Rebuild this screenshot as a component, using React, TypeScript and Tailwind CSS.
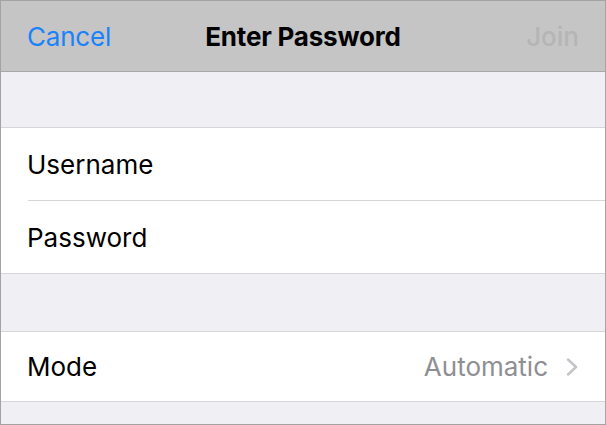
import React from 'react'

const font = { fontFamily: 'Inter, "Liberation Sans", sans-serif' }

const App = () => {
    return (
        <div className="w-[606px] h-[425px] border border-[#a3a3a3] bg-[#efeff4] flex flex-col overflow-hidden" style={font}>
            {/* Nav bar */}
            <div className="h-[71px] shrink-0 bg-[#c5c5c5] border-b border-[#a8a8a8] flex items-center justify-between px-[26px] relative">
                <span className="text-[26px] text-[#1a82fb] tracking-[-0.2px]">Cancel</span>
                <span className="absolute left-0 right-0 text-center text-[26px] font-bold text-black tracking-[-0.2px] pointer-events-none">Enter Password</span>
                <span className="text-[26px] text-[#b5b5b5] font-medium">Join</span>
            </div>

            <div className="h-[55px] shrink-0" />

            {/* Credentials */}
            <div className="bg-white border-y border-[#d6d6da] shrink-0">
                <div className="h-[72px] flex items-center pl-[26px]">
                    <span className="text-[26px] text-black">Username</span>
                </div>
                <div className="ml-[27px] h-px bg-[#d6d6da]" />
                <div className="h-[72px] flex items-center pl-[26px]">
                    <span className="text-[26px] text-black">Password</span>
                </div>
            </div>

            <div className="h-[57px] shrink-0" />

            {/* Mode */}
            <div className="bg-white border-y border-[#d6d6da] h-[71px] shrink-0 flex items-center justify-between pl-[26px] pr-[27px]">
                <span className="text-[26px] text-black">Mode</span>
                <div className="flex items-center gap-[18px]">
                    <span className="text-[26px] text-[#8e8e93]">Automatic</span>
                    <svg width="12" height="18" viewBox="0 0 12 18" fill="none">
                        <path d="M2 1.5 L10 9 L2 16.5" stroke="#c4c4c8" strokeWidth="2.4" strokeLinecap="round" strokeLinejoin="round" />
                    </svg>
                </div>
            </div>
        </div>
    )
}

export default App
